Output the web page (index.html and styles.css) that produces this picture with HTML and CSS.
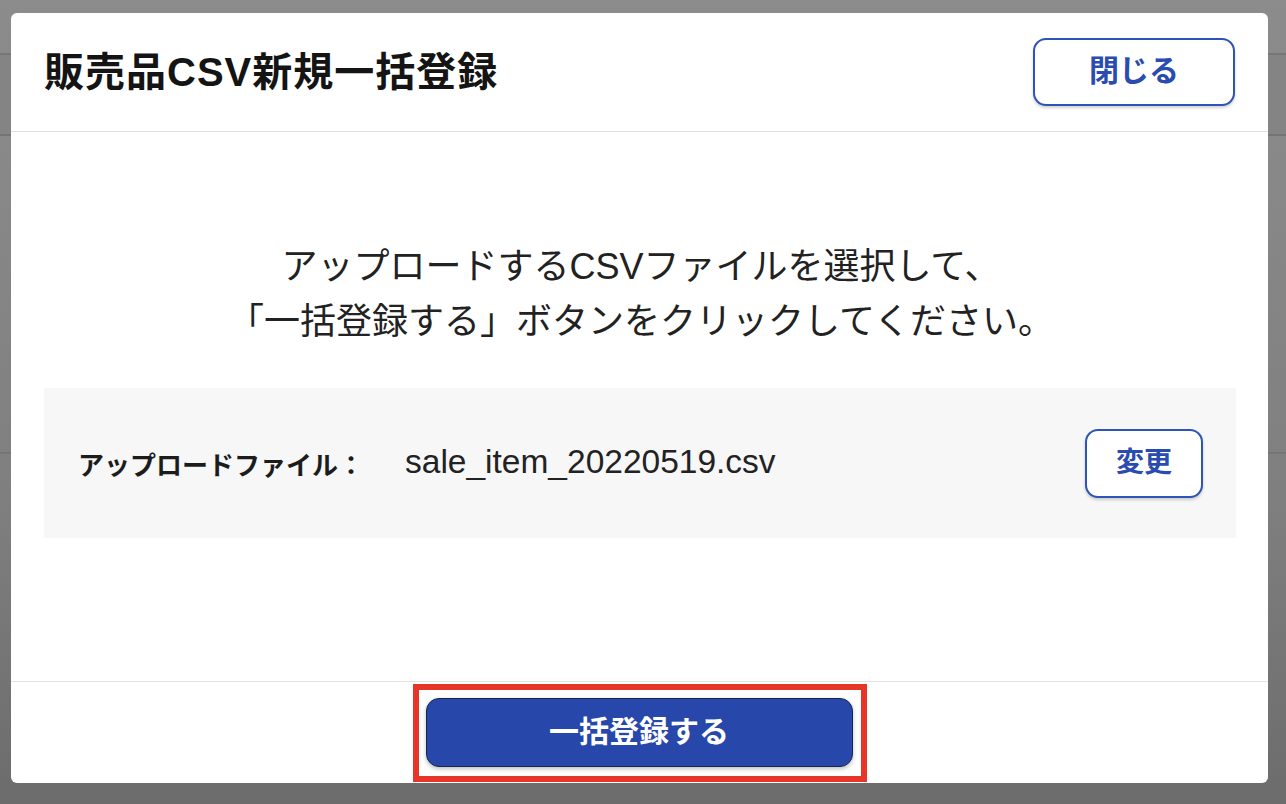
FILE: index.html
```html
<!DOCTYPE html>
<html lang="ja">
<head>
<meta charset="utf-8">
<title>販売品CSV新規一括登録</title>
<link rel="stylesheet" href="styles.css">
</head>
<body>
<div class="backdrop">
  <div class="modal">
    <div class="modal-header">
      <h1 class="modal-title">販売品CSV新規一括登録</h1>
      <button class="btn-outline btn-close">閉じる</button>
    </div>
    <div class="modal-body">
      <p class="instructions">アップロードするCSVファイルを選択して、<br>「一括登録する」ボタンをクリックしてください。</p>
      <div class="file-panel">
        <span class="file-label">アップロードファイル：</span>
        <span class="file-name">sale_item_20220519.csv</span>
        <button class="btn-outline btn-change">変更</button>
      </div>
    </div>
    <div class="modal-footer">
      <div class="highlight">
        <button class="btn-primary">一括登録する</button>
      </div>
    </div>
  </div>
</div>
</body>
</html>
```
FILE: styles.css
```css
html, body {
  margin: 0;
  padding: 0;
}
body {
  width: 1286px;
  height: 804px;
  overflow: hidden;
  font-family: "Liberation Sans", "Noto Sans CJK JP", sans-serif;
}
.backdrop {
  width: 1286px;
  height: 804px;
  box-sizing: border-box;
  padding: 13px 18px 21px 11px;
  background:
    linear-gradient(to bottom, transparent 53px, #777 53px, #777 55px, transparent 55px),
    linear-gradient(to bottom, transparent 134px, #747474 134px, #747474 136px, transparent 136px),
    linear-gradient(to bottom, transparent 452px, #767676 452px, #767676 454px, transparent 454px),
    linear-gradient(to bottom, #8c8c8c 0, #8a8a8a 53px, #848484 55px, #848484 134px, #898989 136px, #7f7f7f 500px, #6c6c6c 804px);
}
.modal {
  width: 1257px;
  height: 770px;
  background: #fff;
  border-radius: 6px;
  display: flex;
  flex-direction: column;
  overflow: hidden;
}
.modal-header {
  height: 118px;
  border-bottom: 1px solid #e2e2e2;
  display: flex;
  align-items: center;
  justify-content: space-between;
  padding: 0 33px;
  flex: none;
}
.modal-title {
  margin: 0;
  font-size: 40px;
  font-weight: 700;
  color: #141414;
  line-height: 1.2;
  letter-spacing: 1px;
}
.btn-outline {
  background: #fff;
  border: 2px solid #2f54b8;
  border-radius: 13px;
  color: #2a4bb0;
  font-family: "Liberation Sans", "Noto Sans CJK JP", sans-serif;
  font-weight: 700;
  box-shadow: 0 2px 3px rgba(0, 0, 0, 0.18);
  padding: 0;
  line-height: 1;
}
.btn-close {
  width: 202px;
  height: 68px;
  font-size: 30px;
  padding-bottom: 2px;
}
.modal-body {
  flex: 1;
  padding: 107px 32px 0 33px;
}
.instructions {
  margin: 0;
  text-align: center;
  font-size: 36px;
  line-height: 55px;
  color: #222;
  padding-left: 2px;
}
.file-panel {
  margin-top: 39px;
  height: 150px;
  background: #f7f7f7;
  display: flex;
  align-items: center;
  padding: 0 33px 0 34px;
}
.file-label {
  width: 327px;
  flex: none;
  font-size: 26px;
  font-weight: 700;
  color: #1c1c1c;
}
.file-name {
  flex: 1;
  font-size: 33.5px;
  color: #222;
  padding-bottom: 2px;
}
.btn-change {
  width: 118px;
  height: 69px;
  font-size: 28px;
}
.modal-footer {
  flex: none;
  border-top: 1px solid #e2e2e2;
  padding: 2px 0 1px;
  display: flex;
  justify-content: center;
}
.highlight {
  border: 6px solid #e8352a;
  padding: 8px 8px 9px 7px;
  display: flex;
}
.btn-primary {
  width: 427px;
  height: 69px;
  background: #2747ab;
  border: 1.5px solid #17254f;
  border-radius: 13px;
  color: #fff;
  font-family: "Liberation Sans", "Noto Sans CJK JP", sans-serif;
  font-size: 30px;
  font-weight: 700;
  line-height: 1;
  padding: 0 0 2px;
  box-shadow: 0 2px 4px rgba(0, 0, 0, 0.25);
}
```
